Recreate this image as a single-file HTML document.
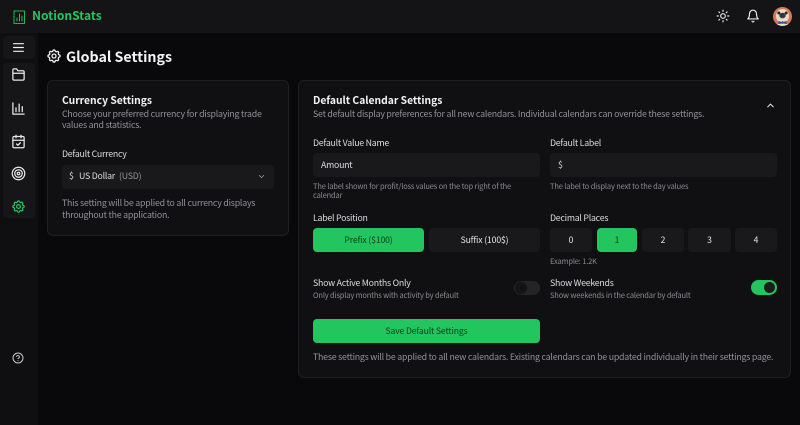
<!DOCTYPE html>
<html><head><meta charset="utf-8"><style>
*{box-sizing:border-box;margin:0;padding:0}
html,body{width:800px;height:425px;overflow:hidden;background:#09090b}
body{position:relative;font-family:"Noto Sans CJK SC","Liberation Sans",sans-serif;color:#e4e4e7}
.a{position:absolute}
.t{position:absolute;white-space:nowrap;line-height:1}
.card{position:absolute;background:#101012;border:1px solid #1f1f22;border-radius:6px}
.inp{position:absolute;background:#19191b;border-radius:4px;height:24px}
.btn{position:absolute;background:#19191b;border-radius:4px;height:24px;display:flex;align-items:center;justify-content:center;font-size:8.600px;letter-spacing:-.12px;color:#e4e4e7}
.g{background:#22c55e;color:#07411c;font-weight:400}
.lab{font-size:8.800px;letter-spacing:-.25px;color:#dcdce0}
.sub{font-size:8.800px;letter-spacing:-.22px;color:#929297}
.sm{font-size:7.500px;letter-spacing:-.16px;color:#8a8a8f}
.h{font-size:10.300px;font-weight:700;color:#f4f4f5}
svg{position:absolute;fill:none;stroke-linecap:round;stroke-linejoin:round}
</style></head><body>
<div class="a" style="left:0;top:0;width:800px;height:33px;background:#141416"></div>
<div class="a" style="left:0;top:33px;width:38px;height:392px;background:#0f0f11"></div>
<div class="a" style="left:3px;top:36px;width:32px;height:23px;background:#161618;border-radius:4px"></div>
<div class="a" style="left:3px;top:63px;width:32px;height:155px;background:#161618;border-radius:4px"></div>

<svg style="left:11px;top:9px" width="16" height="16" viewBox="0 0 16 16" stroke="#22c55e" stroke-width="1"><path d="M3 2h10.500v12.500H3z" stroke-dasharray="2 1"/><path d="M6 12V9M8.500 12V5M11 12V7"/></svg>
<div class="t" style="left:32px;top:10px;font-size:12px;font-weight:700;color:#22c55e">NotionStats</div>

<svg style="left:716px;top:9px" width="14" height="14" viewBox="0 0 24 24" stroke="#e8e8ea" stroke-width="2"><circle cx="12" cy="12" r="4"/><path d="M12 2v2M12 20v2M4.900 4.900l1.400 1.400M17.700 17.700l1.400 1.400M2 12h2M20 12h2M6.300 17.700l-1.400 1.400M19.100 4.900l-1.400 1.400"/></svg>
<svg style="left:746px;top:9px" width="14" height="14" viewBox="0 0 24 24" stroke="#e8e8ea" stroke-width="2"><path d="M6 8a6 6 0 0 1 12 0c0 7 3 9 3 9H3s3-2 3-9"/><path d="M10.300 21a1.900 1.900 0 0 0 3.400 0"/></svg>
<svg style="left:773px;top:7px" width="19" height="19" viewBox="0 0 19 19"><defs><clipPath id="c"><circle cx="9.500" cy="9.500" r="9.500"/></clipPath></defs><g clip-path="url(#c)" style="stroke:none"><rect width="19" height="19" fill="#d97757"/><ellipse cx="9.500" cy="9" rx="6.500" ry="7" fill="#e8dcc8"/><ellipse cx="9.500" cy="8.500" rx="3.200" ry="2.800" fill="#2f3b3c"/><circle cx="5.800" cy="6" r="1.500" fill="#1e2a2a"/><circle cx="13.200" cy="6" r="1.500" fill="#1e2a2a"/><path d="M5.500 14l3 1 1-1 1 1 3-1v3l-3-1-1 .5-1-.5-3 1z" fill="#2848a0"/><rect x="3" y="17" width="13" height="2" fill="#e8dcc8"/></g></svg>

<svg style="left:12px;top:41px" width="13" height="13" viewBox="0 0 24 24" stroke="#f0f0f2" stroke-width="2.200"><path d="M3 5h18M3 12h18M3 19h18"/></svg>
<svg style="left:11px;top:67px" width="15" height="15" viewBox="0 0 24 24" stroke="#e8e8ea" stroke-width="2"><path d="M3 19V5a2 2 0 0 1 2-2h4l2 3h8a2 2 0 0 1 2 2v11a2 2 0 0 1-2 2H5a2 2 0 0 1-2-2z"/><path d="M3 10h18"/></svg>
<svg style="left:11px;top:101px" width="15" height="15" viewBox="0 0 24 24" stroke="#e8e8ea" stroke-width="2"><path d="M3 3v18h18M8 17v-6M13 17V5M18 17V9"/></svg>
<svg style="left:11px;top:134px" width="15" height="15" viewBox="0 0 24 24" stroke="#e8e8ea" stroke-width="2"><rect x="3" y="4" width="18" height="18" rx="2"/><path d="M3 10h18M8 2v4M16 2v4M9 16l2 2 4-4"/></svg>
<svg style="left:11px;top:166px" width="15" height="15" viewBox="0 0 24 24" stroke="#e8e8ea" stroke-width="2"><circle cx="12" cy="12" r="10"/><circle cx="12" cy="12" r="6"/><circle cx="12" cy="12" r="2"/></svg>
<svg style="left:11px;top:199px" width="15" height="15" viewBox="0 0 24 24" stroke="#22c55e" stroke-width="2"><path d="M10.300 4.300c.4-1.800 3-1.800 3.400 0a1.700 1.700 0 0 0 2.600 1.100c1.500-.9 3.300.8 2.400 2.400a1.700 1.700 0 0 0 1.100 2.500c1.800.4 1.800 3 0 3.400a1.700 1.700 0 0 0-1.100 2.600c.9 1.500-.8 3.300-2.400 2.400a1.700 1.700 0 0 0-2.500 1.100c-.4 1.800-3 1.800-3.400 0a1.700 1.700 0 0 0-2.600-1.100c-1.500.9-3.300-.8-2.400-2.400a1.700 1.700 0 0 0-1.100-2.500c-1.800-.4-1.800-3 0-3.400a1.700 1.700 0 0 0 1.100-2.600c-.9-1.500.8-3.300 2.400-2.400 1 .6 2.300.1 2.500-1.100z"/><circle cx="12" cy="12" r="3"/></svg>
<svg style="left:12px;top:352px" width="12" height="12" viewBox="0 0 24 24" stroke="#c8c8cc" stroke-width="2"><circle cx="12" cy="12" r="10"/><path d="M9.100 9a3 3 0 0 1 5.800 1c0 2-3 3-3 3M12 17h.01"/></svg>

<svg style="left:46px;top:48px" width="16" height="16" viewBox="0 0 24 24" stroke="#f0f0f2" stroke-width="2"><path d="M10.300 4.300c.4-1.800 3-1.800 3.400 0a1.700 1.700 0 0 0 2.600 1.100c1.500-.9 3.300.8 2.400 2.400a1.700 1.700 0 0 0 1.100 2.500c1.800.4 1.800 3 0 3.400a1.700 1.700 0 0 0-1.100 2.600c.9 1.500-.8 3.300-2.400 2.400a1.700 1.700 0 0 0-2.500 1.100c-.4 1.800-3 1.800-3.400 0a1.700 1.700 0 0 0-2.600-1.100c-1.500.9-3.300-.8-2.400-2.400a1.700 1.700 0 0 0-1.100-2.500c-1.800-.4-1.800-3 0-3.400a1.700 1.700 0 0 0 1.100-2.600c-.9-1.500.8-3.300 2.400-2.400 1 .6 2.300.1 2.500-1.100z"/><circle cx="12" cy="12" r="3"/></svg>
<div class="t" style="left:66px;top:50px;font-size:14.200px;font-weight:700;color:#f4f4f5">Global Settings</div>

<div class="card" style="left:47px;top:80px;width:242px;height:156px"></div>
<div class="t h" style="left:62px;top:95px">Currency Settings</div>
<div class="t sub" style="left:62px;top:110px">Choose your preferred currency for displaying trade</div>
<div class="t sub" style="left:62px;top:121px">values and statistics.</div>
<div class="t lab" style="left:62px;top:150px">Default Currency</div>
<div class="inp" style="left:62px;top:165px;width:212px"></div>
<div class="t lab" style="left:69px;top:172px">$</div>
<div class="t lab" style="left:79px;top:172px">US Dollar</div>
<div class="t sub" style="left:119px;top:172px">(USD)</div>
<svg style="left:257px;top:172px" width="9" height="9" viewBox="0 0 24 24" stroke="#a0a0a5" stroke-width="2"><path d="M6 9l6 6 6-6"/></svg>
<div class="t sub" style="left:62px;top:199px">This setting will be applied to all currency displays</div>
<div class="t sub" style="left:62px;top:211px">throughout the application.</div>

<div class="card" style="left:298px;top:80px;width:493px;height:298px"></div>
<div class="t h" style="left:313px;top:95px">Default Calendar Settings</div>
<div class="t sub" style="left:313px;top:110px">Set default display preferences for all new calendars. Individual calendars can override these settings.</div>
<svg style="left:765px;top:100px" width="11" height="11" viewBox="0 0 24 24" stroke="#e8e8ea" stroke-width="2.200"><path d="M6 15l6-6 6 6"/></svg>

<div class="t lab" style="left:313px;top:139px">Default Value Name</div>
<div class="inp" style="left:313px;top:153px;width:227px"></div>
<div class="t lab" style="left:321px;top:161px">Amount</div>
<div class="t sm" style="left:313px;top:183px">The label shown for profit/loss values on the top right of the</div>
<div class="t sm" style="left:313px;top:192px">calendar</div>
<div class="t lab" style="left:550px;top:139px">Default Label</div>
<div class="inp" style="left:550px;top:153px;width:227px"></div>
<div class="t lab" style="left:558px;top:161px">$</div>
<div class="t sm" style="left:550px;top:183px">The label to display next to the day values</div>

<div class="t lab" style="left:313px;top:214px">Label Position</div>
<div class="btn g" style="left:313px;top:228px;width:111px">Prefix ($100)</div>
<div class="btn" style="left:429px;top:228px;width:111px">Suffix (100$)</div>
<div class="t lab" style="left:550px;top:214px">Decimal Places</div>
<div class="btn" style="left:550px;top:228px;width:42px">0</div>
<div class="btn g" style="left:597px;top:228px;width:40px">1</div>
<div class="btn" style="left:642px;top:228px;width:42px">2</div>
<div class="btn" style="left:688px;top:228px;width:43px">3</div>
<div class="btn" style="left:735px;top:228px;width:42px">4</div>
<div class="t sm" style="left:550px;top:258px">Example: 1.2K</div>

<div class="t lab" style="left:313px;top:279px">Show Active Months Only</div>
<div class="t sm" style="left:313px;top:292px">Only display months with activity by default</div>
<div class="a" style="left:514px;top:281px;width:26px;height:14px;border-radius:7px;background:#242427"></div>
<div class="a" style="left:515px;top:282px;width:12px;height:12px;border-radius:6px;background:#141416"></div>
<div class="t lab" style="left:550px;top:279px">Show Weekends</div>
<div class="t sm" style="left:550px;top:292px">Show weekends in the calendar by default</div>
<div class="a" style="left:751px;top:280px;width:26px;height:15px;border-radius:8px;background:#22c55e"></div>
<div class="a" style="left:764px;top:282px;width:11px;height:11px;border-radius:6px;background:#1c1c1e"></div>

<div class="btn g" style="left:313px;top:319px;width:227px;height:24px;background:#22c55e">Save Default Settings</div>
<div class="t sub" style="left:313px;top:353px">These settings will be applied to all new calendars. Existing calendars can be updated individually in their settings page.</div>
</body></html>
